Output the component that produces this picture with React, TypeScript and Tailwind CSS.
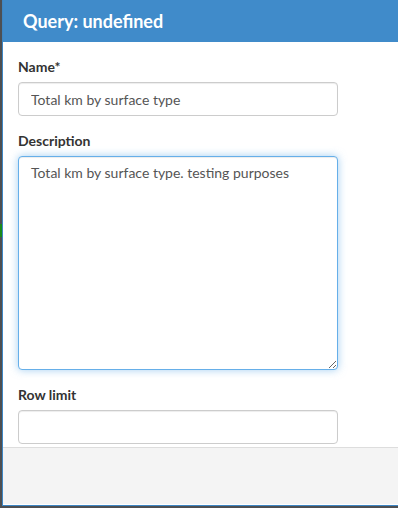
import { useEffect, useRef } from 'react';

function Field({ label, children }: { label: string; children: React.ReactNode }) {
  return (
    <div className="mb-[15px]">
      <label className="mb-[5px] block text-[14px] font-bold leading-[20px] text-[#333]">{label}</label>
      {children}
    </div>
  );
}

export default function App() {
  const ref = useRef<HTMLTextAreaElement>(null);

  useEffect(() => {
    const el = ref.current;
    if (el) {
      el.focus();
      el.setSelectionRange(el.value.length, el.value.length);
    }
  }, []);

  return (
    <div className="flex h-[508px] w-[398px] overflow-hidden bg-[#4d4f52] font-['Lato',sans-serif]">
      {/* backdrop strip */}
      <div className="w-[2px] shrink-0">
        <div className="mt-[224px] h-[13px] bg-[#1a8a1a]" />
      </div>

      {/* modal */}
      <div className="flex h-[506px] w-[420px] shrink-0 flex-col border-b border-l border-[#3d86c4] bg-white">
        <div className="flex h-[42px] shrink-0 items-center bg-[#408bca] pl-[20px]">
          <h4 className="text-[18px] font-bold leading-none text-white">Query: undefined</h4>
        </div>

        <div className="h-[405px] shrink-0 overflow-hidden px-[15px] pt-[15px]">
          <Field label="Name*">
            <input
              type="text"
              defaultValue="Total km by surface type"
              className="block h-[34px] w-[320px] rounded-[4px] border border-[#ccc] bg-white px-[12px] text-[14px] text-[#555] shadow-[inset_0_1px_1px_rgba(0,0,0,0.075)] outline-none"
            />
          </Field>
          <Field label="Description">
            <textarea
              ref={ref}
              defaultValue="Total km by surface type. testing purposes"
              className="block h-[214px] w-[320px] resize rounded-[4px] border border-[#66afe9] bg-white px-[12px] py-[6px] text-[14px] leading-[20px] text-[#555] shadow-[inset_0_1px_1px_rgba(0,0,0,0.075),0_0_8px_rgba(102,175,233,0.6)] outline-none"
            />
          </Field>
          <Field label="Row limit">
            <input
              type="text"
              className="block h-[34px] w-[320px] rounded-[4px] border border-[#ccc] bg-white px-[12px] text-[14px] text-[#555] shadow-[inset_0_1px_1px_rgba(0,0,0,0.075)] outline-none"
            />
          </Field>
        </div>

        <div className="flex-1 border-t border-[#ddd] bg-[#f4f4f4]" />
        <div className="h-[1px] shrink-0 bg-white" />
      </div>
    </div>
  );
}
